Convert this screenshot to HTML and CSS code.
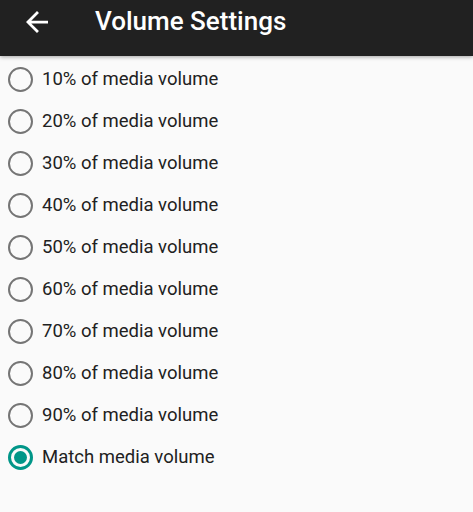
FILE: index.html
```html
<!DOCTYPE html>
<html>
<head>
<meta charset="utf-8">
<link rel="stylesheet" href="styles.css">
</head>
<body>
<header class="appbar">
  <svg class="back" viewBox="4 4 16 16" width="22" height="22"><path fill="#fff" d="M20 11H7.83l5.59-5.59L12 4l-8 8 8 8 1.41-1.41L7.83 13H20v-2z"/></svg>
  <h1 class="title">Volume Settings</h1>
</header>
<ul class="list">
  <li class="row"><span class="radio"></span><span class="label">10% of media volume</span></li>
  <li class="row"><span class="radio"></span><span class="label">20% of media volume</span></li>
  <li class="row"><span class="radio"></span><span class="label">30% of media volume</span></li>
  <li class="row"><span class="radio"></span><span class="label">40% of media volume</span></li>
  <li class="row"><span class="radio"></span><span class="label">50% of media volume</span></li>
  <li class="row"><span class="radio"></span><span class="label">60% of media volume</span></li>
  <li class="row"><span class="radio"></span><span class="label">70% of media volume</span></li>
  <li class="row"><span class="radio"></span><span class="label">80% of media volume</span></li>
  <li class="row"><span class="radio"></span><span class="label">90% of media volume</span></li>
  <li class="row"><span class="radio checked"></span><span class="label">Match media volume</span></li>
</ul>
</body>
</html>
```

FILE: styles.css
```css
html, body {
  margin: 0;
  padding: 0;
  background: #fafafa;
  font-family: Roboto, "Liberation Sans", sans-serif;
  width: 473px;
  height: 512px;
  overflow: hidden;
}
.appbar {
  height: 56px;
  background: #212121;
  display: flex;
  align-items: flex-start;
  box-shadow: 0 1px 4px rgba(0,0,0,0.35);
  position: relative;
  z-index: 1;
}
.back {
  margin: 11px 0 0 26px;
  flex: none;
}
.title {
  margin: 3px 0 0 47px;
  font-size: 26px;
  font-weight: 500;
  color: #fff;
  line-height: 36px;
}
.list {
  list-style: none;
  margin: 0;
  padding: 2px 0 0 0;
}
.row {
  height: 42px;
  display: flex;
  align-items: center;
}
.radio {
  box-sizing: border-box;
  width: 25px;
  height: 25px;
  margin-left: 8px;
  border: 2.5px solid #757575;
  border-radius: 50%;
  flex: none;
  display: flex;
  align-items: center;
  justify-content: center;
}
.radio.checked {
  border: 3px solid #009688;
}
.radio.checked::after {
  content: "";
  width: 13px;
  height: 13px;
  border-radius: 50%;
  background: #009688;
}
.label {
  margin-left: 9px;
  font-size: 18.5px;
  color: #212121;
}
```
